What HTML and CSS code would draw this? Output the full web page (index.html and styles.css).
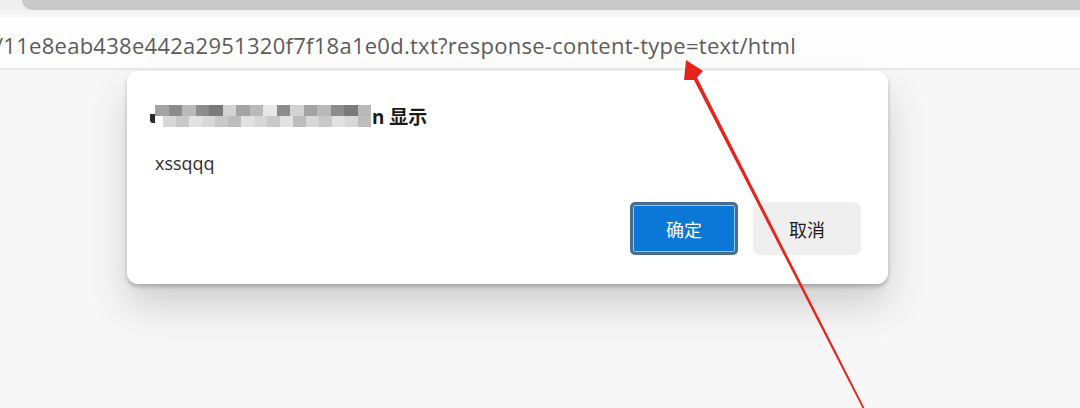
FILE: index.html
```html
<!DOCTYPE html>
<html lang="zh">
<head>
<meta charset="utf-8">
<title>alert</title>
<link rel="stylesheet" href="styles.css">
</head>
<body>
<div class="page">
  <div class="topstrip"><div class="tabbar"></div></div>
  <div class="addressbar">
    <span class="url">/11e8eab438e442a2951320f7f18a1e0d.txt?response-content-type=text/html</span>
  </div>
  <div class="content"></div>

  <div class="dialog">
    <div class="title">
      <span class="stub"></span>
      <span class="mosaic">
        <span class="row top">
          <i class="g1"></i><i class="g2"></i><i class="g3"></i><i class="g2"></i><i class="g4"></i><i class="g5"></i><i class="g1"></i><i class="g3"></i><i class="g6"></i><i class="g2"></i><i class="g5"></i><i class="g1"></i><i class="g3"></i><i class="g2"></i><i class="g4"></i><i class="g3"></i>
        </span>
        <span class="row bottom">
          <i class="h1"></i><i class="h2"></i><i class="h3"></i><i class="h1"></i><i class="h2"></i><i class="h4"></i><i class="h3"></i><i class="h1"></i><i class="h2"></i><i class="h3"></i><i class="h4"></i><i class="h1"></i><i class="h2"></i><i class="h3"></i><i class="h1"></i><i class="h4"></i>
        </span>
      </span>
      <span class="title-text">n 显示</span>
    </div>
    <div class="message">xssqqq</div>
    <div class="actions">
      <button class="btn primary">确定</button>
      <button class="btn secondary">取消</button>
    </div>
  </div>

  <svg class="annotation" width="1080" height="408" viewBox="0 0 1080 408">
    <polygon points="686,60 703,71 697,77.5 866.5,412 864.5,412 694,80 684,80" fill="#e8231d"/>
  </svg>
</div>
</body>
</html>
```
FILE: styles.css
```css
html, body {
  margin: 0;
  padding: 0;
}
body {
  width: 1080px;
  height: 408px;
  overflow: hidden;
  background: #f7f7f7;
  font-family: "Open Sans", "Noto Sans", "Noto Sans CJK SC", sans-serif;
}
.page {
  position: relative;
  width: 1080px;
  height: 408px;
  display: flex;
  flex-direction: column;
}
.topstrip {
  height: 17px;
  background: linear-gradient(#efefef 0, #efefef 10px, #f3f3f3 10px, #f7f7f7 17px);
  flex: none;
}
.tabbar {
  margin-left: 22px;
  height: 10px;
  background: #c9c9c9;
  border-bottom-left-radius: 10px;
}
.addressbar {
  height: 51px;
  background: #fefefe;
  border-bottom: 2px solid #e9e9e9;
  display: flex;
  align-items: center;
  flex: none;
  overflow: hidden;
}
.url {
  font-family: "Open Sans", "Noto Sans", sans-serif;
  font-size: 22px;
  color: #5c5c5c;
  letter-spacing: 0.27px;
  margin-left: -5px;
  white-space: nowrap;
  padding-top: 4px;
}
.content {
  flex: 1;
  background: #f7f7f7;
}
.dialog {
  position: absolute;
  left: 127px;
  top: 71px;
  width: 761px;
  height: 213px;
  box-sizing: border-box;
  background: #ffffff;
  border-radius: 11px;
  box-shadow: 0 3px 4px rgba(0, 0, 0, 0.22), 0 22px 40px rgba(0, 0, 0, 0.16);
  padding: 30px 27px 0 23px;
  display: flex;
  flex-direction: column;
}
.title {
  display: flex;
  align-items: center;
  height: 30px;
  font-size: 19px;
  font-weight: 700;
  color: #1b1b1b;
  font-family: "Noto Sans", "Noto Sans CJK SC", sans-serif;
}
.stub {
  display: block;
  width: 5px;
  height: 9px;
  margin-top: 4px;
  background: #2a2a2a;
  border-radius: 0 0 0 3px;
}
.mosaic {
  display: inline-flex;
  flex-direction: column;
  width: 216px;
  height: 22px;
}
.mosaic .row {
  display: flex;
  height: 11px;
}
.mosaic .row.bottom {
  margin-left: 8px;
}
.mosaic i {
  flex: 1;
  display: block;
}
.g1 { background: #a3a3a3; }
.g2 { background: #8c8c8c; }
.g3 { background: #b9b9b9; }
.g4 { background: #7a7a7a; }
.g5 { background: #d3d3d3; }
.g6 { background: #e8e8e8; }
.h1 { background: #d8d8d8; }
.h2 { background: #c9c9c9; }
.h3 { background: #e2e2e2; }
.h4 { background: #bdbdbd; }
.title-text {
  margin-left: 1px;
}
.message {
  margin-top: 20px;
  font-size: 18px;
  color: #2e2e2e;
  margin-left: 5px;
}
.actions {
  margin-top: 27px;
  display: flex;
  justify-content: flex-end;
  gap: 15px;
}
.btn {
  width: 108px;
  height: 53px;
  border-radius: 5px;
  font-family: "Noto Sans CJK SC", sans-serif;
  font-size: 18px;
  padding: 0;
  cursor: pointer;
}
.btn.primary {
  background: #0b78d7;
  color: #ffffff;
  border: 3px solid #4b6d8d;
  box-shadow: inset 0 0 0 1px #8cc6f2;
}
.btn.secondary {
  background: #efefef;
  color: #1e1e1e;
  border: none;
  border-radius: 7px;
}
.annotation {
  position: absolute;
  left: 0;
  top: 0;
  pointer-events: none;
}
```
